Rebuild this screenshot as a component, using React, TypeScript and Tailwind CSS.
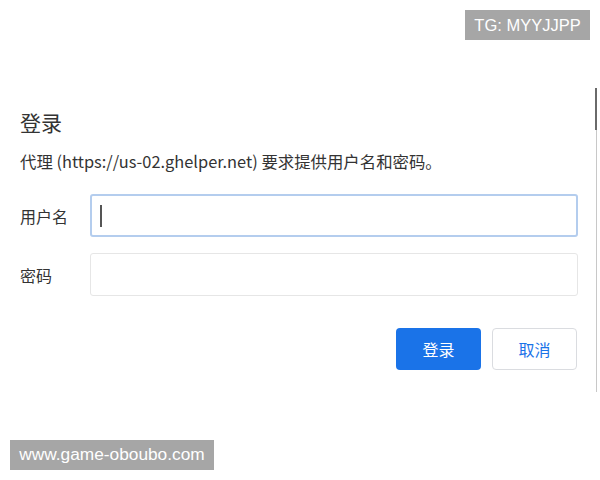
import React from "react";

export default function App() {
  return (
    <div
      className="relative w-[600px] h-[480px] bg-white overflow-hidden"
      style={{ fontFamily: '"Noto Sans CJK SC", "Noto Sans", sans-serif' }}
    >
      <div className="absolute right-[10px] top-[10px] w-[125px] h-[30px] bg-[#a6a6a6] text-white text-[16.5px] flex items-center justify-center" style={{ fontFamily: '"Liberation Sans", Arial, sans-serif' }}>
        TG: MYYJJPP
      </div>
      <div className="absolute right-[3px] top-[88px] w-[1px] h-[304px] bg-[#c8c8c8]" />
      <div className="absolute right-[3px] top-[88px] w-[2px] h-[42px] bg-[#6a6a6a]" />

      <div className="pt-[106px] pl-[20px] pr-[22px] flex flex-col">
        <div className="text-[21px] leading-[32px] text-[#333333]">登录</div>
        <div className="mt-[11px] text-[16.4px] leading-[24px] text-[#333333]">
          代理 (https://us-02.ghelper.net) 要求提供用户名和密码。
        </div>
        <div className="mt-[21px] flex items-center">
          <div className="w-[70px] text-[16px] text-[#333333]">用户名</div>
          <div className="flex-1 h-[43px] rounded-[3px] border-2 border-[#b4cdee] flex items-center pl-[8px]">
            <div className="w-[2px] h-[22px] bg-[#555555]" />
          </div>
        </div>
        <div className="mt-[16px] flex items-center">
          <div className="w-[70px] text-[16px] text-[#333333]">密码</div>
          <div className="flex-1 h-[43px] rounded-[3px] border border-[#e6e6e6]" />
        </div>
        <div className="mt-[32px] flex justify-end gap-[11px] pr-[1px]">
          <div className="w-[85px] h-[42px] rounded-[4px] bg-[#1a73e8] text-white text-[16px] flex items-center justify-center">
            登录
          </div>
          <div className="w-[85px] h-[42px] rounded-[4px] border border-[#dadce0] text-[#1a73e8] text-[16px] flex items-center justify-center">
            取消
          </div>
        </div>
      </div>

      <div className="absolute left-[10px] top-[440px] w-[204px] h-[30px] bg-[#a6a6a6] text-white text-[17.3px] flex items-center justify-center" style={{ fontFamily: '"Liberation Sans", Arial, sans-serif' }}>
        www.game-oboubo.com
      </div>
    </div>
  );
}
